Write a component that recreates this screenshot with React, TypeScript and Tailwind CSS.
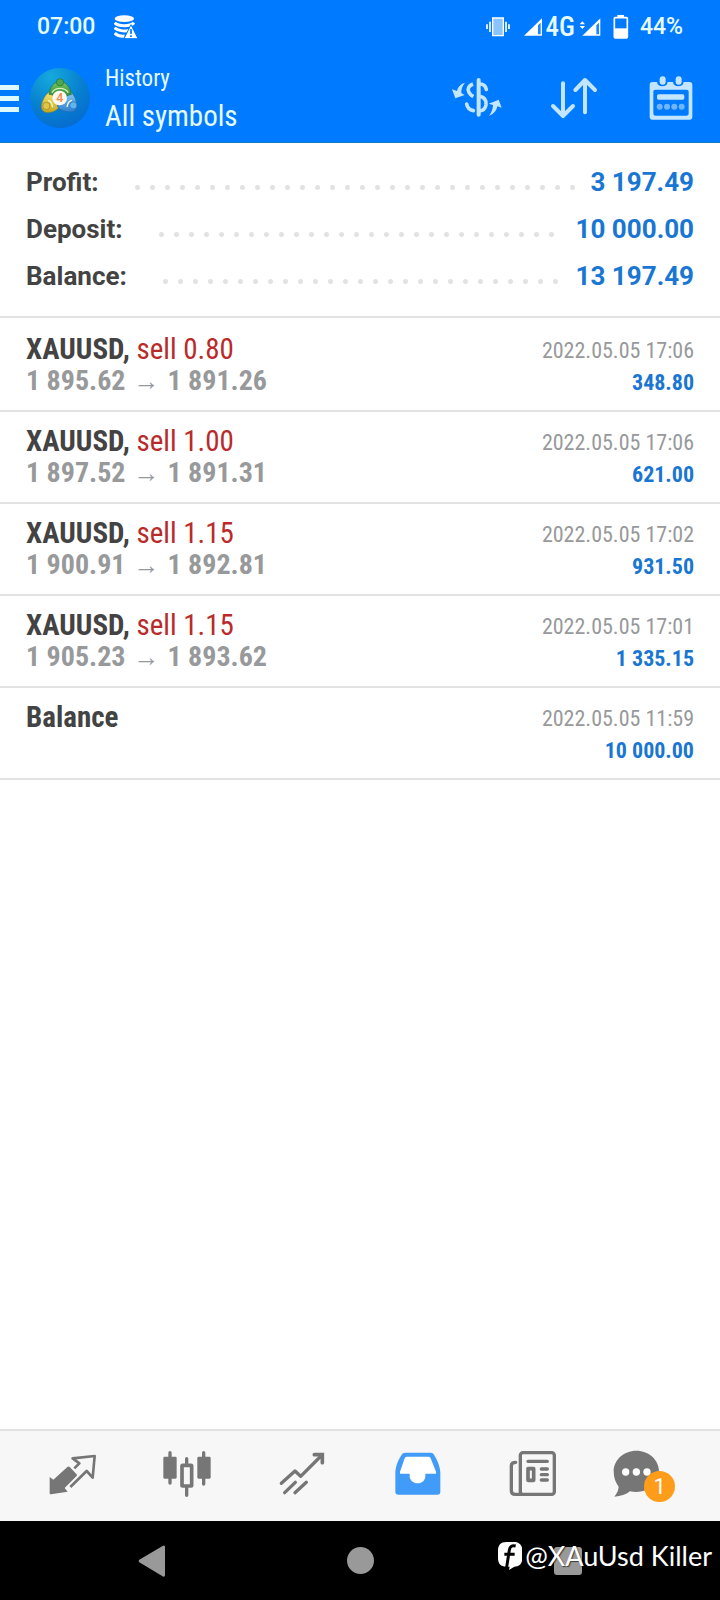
import type { ReactNode } from 'react'

interface Deal {
  id: number
  symbol: string
  action?: string
  open?: string
  close?: string
  time: string
  amount: string
}

const summary = [
  { label: 'Profit:', value: '3 197.49' },
  { label: 'Deposit:', value: '10 000.00' },
  { label: 'Balance:', value: '13 197.49' },
]

const deals: Deal[] = [
  { id: 1, symbol: 'XAUUSD,', action: 'sell 0.80', open: '1 895.62', close: '1 891.26', time: '2022.05.05 17:06', amount: '348.80' },
  { id: 2, symbol: 'XAUUSD,', action: 'sell 1.00', open: '1 897.52', close: '1 891.31', time: '2022.05.05 17:06', amount: '621.00' },
  { id: 3, symbol: 'XAUUSD,', action: 'sell 1.15', open: '1 900.91', close: '1 892.81', time: '2022.05.05 17:02', amount: '931.50' },
  { id: 4, symbol: 'XAUUSD,', action: 'sell 1.15', open: '1 905.23', close: '1 893.62', time: '2022.05.05 17:01', amount: '1 335.15' },
  { id: 5, symbol: 'Balance', time: '2022.05.05 11:59', amount: '10 000.00' },
]

function StatusBar() {
  return (
    <div className="flex h-[54px] items-center px-[37px] text-[23px] font-medium text-[#e6fbff]">
      <span>07:00</span>
      <svg className="ml-[19px] h-6 w-6" viewBox="340 43 72 72" aria-hidden>
        <ellipse cx="371" cy="54" rx="29" ry="10" fill="#fff" />
        <g fill="none" stroke="#fff" strokeWidth="9">
          <path d="M342 66c10 12 48 12 58 0" />
          <path d="M342 81c8 9 30 12 42 8" />
          <path d="M342 97c8 8 22 10 30 9" />
        </g>
        <path d="M391 72L412 114H370Z" fill="#fff" stroke="#007aff" strokeWidth="3" />
        <path d="M391 85v15M391 104v5" stroke="#007aff" strokeWidth="5" />
      </svg>
      <div className="ml-auto flex items-center">
        <svg className="h-5 w-6" viewBox="168 50 72 60" aria-hidden>
          <path d="M188 53h32v53h-32z" fill="#8ac4ff" stroke="#fff" strokeWidth="4" />
          <path d="M180 64v31M228 64v31M171 72v14M237 72v14" stroke="#fff" strokeWidth="5" />
        </svg>
        <svg className="ml-[13px] h-5 w-5" viewBox="278 50 60 60" aria-hidden>
          <path d="M281 106L335 54v52z" fill="#fff" />
          <path d="M323 75l8-8v35h-8z" fill="#1a86ff" />
        </svg>
        <span className="ml-[3px] font-['Roboto_Condensed',Roboto,sans-serif] text-[27px] leading-7 font-medium">4G</span>
        <svg className="ml-1 h-5 w-[22px]" viewBox="448 50 66 60" aria-hidden>
          <path d="M458 106L512 54v52z" fill="#fff" />
          <path d="M500 75l8-8v35h-8z" fill="#1a86ff" />
          <path d="M450 72l8-9 8 9zM450 77l8 9 8-9z" fill="#fff" />
        </svg>
        <svg className="ml-3 h-6 w-4" viewBox="551 42 48 72" aria-hidden>
          <path d="M564 42h20v8h-20z" fill="#fff" />
          <rect x="555" y="50" width="39" height="61" rx="3" fill="none" stroke="#fff" strokeWidth="5" />
          <path d="M555 82h39v29h-39z" fill="#fff" />
        </svg>
        <span className="ml-[11px]">44%</span>
      </div>
    </div>
  )
}

function Logo() {
  return (
    <svg className="ml-[11px] h-[60px] w-[60px]" viewBox="0 0 180 180" aria-hidden>
      <defs>
        <radialGradient id="disc" cx="0.35" cy="0.15" r="0.95">
          <stop offset="0" stopColor="#16a9de" />
          <stop offset="0.55" stopColor="#0780cf" />
          <stop offset="1" stopColor="#0668cf" />
        </radialGradient>
        <linearGradient id="green" x1="0" y1="0" x2="0" y2="1">
          <stop offset="0" stopColor="#7cc65c" />
          <stop offset="1" stopColor="#2c8b3c" />
        </linearGradient>
        <linearGradient id="yellow" x1="0" y1="0" x2="0" y2="1">
          <stop offset="0" stopColor="#f2ea7a" />
          <stop offset="1" stopColor="#c9a821" />
        </linearGradient>
        <linearGradient id="blue" x1="0" y1="0" x2="0" y2="1">
          <stop offset="0" stopColor="#8fd0f5" />
          <stop offset="1" stopColor="#2d7fd0" />
        </linearGradient>
      </defs>
      <circle cx="90" cy="90" r="90" fill="url(#disc)" />
      <path d="M66 68c-14 4-27 22-31 42-2 14 4 22 16 23 16 1 30-6 36-16z" fill="url(#yellow)" stroke="#9c8d22" strokeWidth="2" />
      <path d="M114 68c14 4 24 22 26 40 1 14-6 24-18 24-18 0-34-6-40-18z" fill="url(#blue)" stroke="#2467ad" strokeWidth="2" />
      <path d="M90 41c-18 0-31 16-33 38 8 0 14 4 18 8l32 0c4-4 10-7 17-7-2-22-16-39-34-39z" fill="url(#green)" stroke="#246f3c" strokeWidth="2" />
      <path d="M66 74c4-8 12-13 24-13s20 5 25 13" fill="none" stroke="#d6efc0" strokeWidth="4" />
      <path d="M54 98c6 0 12 8 14 20M126 97c-7 1-13 8-15 20" fill="none" stroke="#f4f6cf" strokeWidth="4" />
      <circle cx="90" cy="43" r="11" fill="#4fa84e" stroke="#1d733c" strokeWidth="2" />
      <circle cx="49" cy="114" r="11" fill="#e0c548" stroke="#94821e" strokeWidth="2" />
      <circle cx="130" cy="112" r="11" fill="#62b4ec" stroke="#2467ad" strokeWidth="2" />
      <circle cx="89" cy="90" r="22" fill="#fdf8f2" />
      <text x="89" y="103" textAnchor="middle" fontFamily="Roboto, sans-serif" fontSize="37" fontWeight="500" fill="#f08a4b">
        4
      </text>
    </svg>
  )
}

function AppBar() {
  return (
    <div className="flex h-[89px] items-center border-b border-[#1579c9] pr-6">
      <button aria-label="Open menu" className="flex w-[19px] flex-col gap-[6px]">
        <span className="h-[5px] w-full bg-[#dffaff]" />
        <span className="h-[5px] w-full bg-[#dffaff]" />
        <span className="h-[5px] w-full bg-[#dffaff]" />
      </button>
      <Logo />
      <div className="ml-[15px] pt-1 font-['Roboto_Condensed',Roboto,sans-serif] text-[#e6fbff]">
        <p className="text-[23px] leading-8">History</p>
        <h1 className="text-[29px] leading-[42px]">All symbols</h1>
      </div>
      <div className="ml-auto flex gap-[47px]">
        <button aria-label="Symbol filter">
          <svg className="h-[45px] w-[50px]" viewBox="67 227 150 135" fill="none" stroke="#c4e5ff" aria-hidden>
            <path d="M147 239v104" strokeWidth="12" strokeLinecap="round" />
            <path d="M151 251c10 0 17 6 19 16" strokeWidth="11" strokeLinecap="round" />
            <path d="M130 251c-13 5-18 15-12 25 3 6 8 10 13 13" strokeWidth="11" />
            <path d="M151 288c14 4 20 14 18 26-2 10-9 17-19 18" strokeWidth="11" />
            <path d="M111 311c2 11 9 18 20 20" strokeWidth="11" strokeLinecap="round" />
            <path d="M106 247c-12 3-21 12-24 25l-15-5 10 27 28-10-10-6c-1-11 3-21 11-31z" fill="#c4e5ff" stroke="none" />
            <path d="M178 347c14-6 23-16 25-29l13 4-9-24-30 12 13 4c0 13-5 23-12 33z" fill="#c4e5ff" stroke="none" />
          </svg>
        </button>
        <button aria-label="Sort">
          <svg
            className="h-[45px] w-[50px]"
            viewBox="357 227 150 135"
            fill="none"
            stroke="#c4e5ff"
            strokeWidth="12"
            strokeLinecap="round"
            strokeLinejoin="round"
            aria-hidden
          >
            <path d="M399 249v98M369 317l30 30 30-30" />
            <path d="M465 336v-96M436 269l29-30 30 30" />
          </svg>
        </button>
        <button aria-label="Period">
          <svg className="h-[45px] w-[50px]" viewBox="649 227 150 135" aria-hidden>
            <path
              fillRule="evenodd"
              d="M668 245h14c1 9 7 13 16 13s15-4 16-13h16c1 9 7 13 16 13s15-4 16-13h18c5 0 8 3 8 8v97c0 5-3 8-8 8h-112c-5 0-8-3-8-8v-97c0-5 3-8 8-8zM678 268c-5 0-7 2-7 7v64c0 5 2 7 7 7h92c5 0 7-2 7-7v-64c0-5-2-7-7-7z"
              fill="#c4e5ff"
            />
            <rect x="690" y="228" width="18" height="25" rx="9" fill="#c4e5ff" />
            <rect x="738" y="228" width="18" height="25" rx="9" fill="#c4e5ff" />
            <rect x="682" y="282" width="82" height="16" rx="5" fill="#c4e5ff" />
            <g fill="#6fb5ff">
              <circle cx="690" cy="319" r="9" />
              <circle cx="712" cy="319" r="9" />
              <circle cx="734" cy="319" r="9" />
              <circle cx="756" cy="319" r="9" />
            </g>
          </svg>
        </button>
      </div>
    </div>
  )
}

function Summary() {
  return (
    <dl className="border-b-2 border-[#e2e2e2] px-[26px] py-4 text-[26px] leading-[47px] font-bold">
      {summary.map((row) => (
        <div key={row.label} className="flex">
          <dt className="text-[#434343]">{row.label}</dt>
          {/* dotted leader */}
          <dd
            aria-hidden
            className="mt-[21px] mr-[13px] ml-[31px] h-[15px] flex-1 bg-[radial-gradient(circle,#e2e2e2_2px,transparent_3px)] bg-[length:15px_15px] bg-repeat-x"
          />
          <dd className="text-[#1976d2]">{row.value}</dd>
        </div>
      ))}
    </dl>
  )
}

function DealRow({ deal }: { deal: Deal }) {
  return (
    <li className="border-b-2 border-[#e2e2e2] px-[26px] py-[13px]">
      <div className="flex h-8 items-end justify-between">
        <p className="text-[29px] leading-8 text-[#b92b2b]">
          <span className="font-bold text-[#434343]">{deal.symbol}</span>
          {deal.action && ` ${deal.action}`}
        </p>
        <time className="text-[22px] leading-7 text-[#97999b]">{deal.time}</time>
      </div>
      <div className="flex h-8 items-end">
        {deal.open && (
          <p className="flex items-center text-[28px] leading-8 font-bold text-[#97999b]">
            {deal.open}
            <span className="mx-2 font-['Liberation_Sans',sans-serif] text-[26px] font-normal">→</span>
            {deal.close}
          </p>
        )}
        <p className="ml-auto text-[22px] leading-7 font-bold text-[#1976d2]">{deal.amount}</p>
      </div>
    </li>
  )
}

function Tab({ label, children }: { label: string; children: ReactNode }) {
  return (
    <a href="#" aria-label={label} className="flex flex-1 items-center justify-center">
      {children}
    </a>
  )
}

function TabBar() {
  return (
    <nav className="flex h-[92px] border-t-2 border-[#e2e2e2] bg-[#f7f7f7] px-[14px] pb-1">
      <Tab label="Quotes">
        <svg className="h-12 w-12" viewBox="145 91 144 144" aria-hidden>
          <path
            d="M204 141c3-1 5 0 7 2l19 20c3 3 2 5 0 7l-35 35 9 11-50 8c-3 0-4-1-4-4v-48l11 8z"
            fill="#767676"
          />
          <path
            d="M224 146l15-15-20-15 66-7-6 65-18-20-49 48"
            fill="none"
            stroke="#767676"
            strokeWidth="8"
            strokeLinejoin="round"
          />
        </svg>
      </Tab>
      <Tab label="Charts">
        <svg className="h-12 w-12" viewBox="491 91 144 144" aria-hidden>
          <g stroke="#767676" strokeWidth="10" strokeLinecap="round">
            <path d="M512 99v91M562 117v14M562 205v22M613 99v94" />
          </g>
          <rect x="492" y="111" width="40" height="66" rx="4" fill="#767676" />
          <rect x="594" y="111" width="40" height="66" rx="4" fill="#767676" />
          <rect x="548" y="137" width="29" height="62" rx="2" fill="#f7f7f7" stroke="#767676" strokeWidth="11" />
        </svg>
      </Tab>
      <Tab label="Trade">
        <svg
          className="h-12 w-12"
          viewBox="115 91 144 144"
          fill="none"
          stroke="#767676"
          strokeWidth="10"
          strokeLinecap="round"
          aria-hidden
        >
          <path d="M125 191l41-37 17 16 64-64" strokeLinejoin="round" />
          <path d="M224 105h24v24" strokeWidth="11" />
          <path d="M135 219l32-31M166 219l34-31" />
        </svg>
      </Tab>
      <Tab label="History">
        <svg className="h-12 w-12" viewBox="461 91 144 144" aria-hidden>
          <path
            d="M495 99h76c5 0 8 2 10 6 9 15 19 35 19 56v55c0 6-3 9-9 9H474c-6 0-9-3-9-9v-55c0-21 9-41 19-56 2-4 6-6 11-6z"
            fill="#419bf9"
          />
          <path
            d="M502 111h61c4 0 6 1 8 5l16 40c1 4 0 6-3 6h-29v7c0 12-9 22-23 22s-24-10-24-22v-7h-25c-4 0-5-2-4-6l14-40c2-4 5-5 9-5z"
            fill="#fff"
          />
        </svg>
      </Tab>
      <Tab label="News">
        <svg className="h-12 w-12" viewBox="88 91 144 144" fill="none" stroke="#767676" strokeWidth="10" aria-hidden>
          <rect x="122" y="99" width="102" height="125" rx="8" />
          <path d="M108 128c-8 0-13 3-13 10v75c0 8 4 11 12 11h20" strokeLinecap="round" />
          <path d="M145 125h58M185 148h18M185 165h18M185 181h18" strokeLinecap="round" />
          <rect x="145" y="147" width="17" height="35" strokeWidth="11" strokeLinejoin="round" />
        </svg>
      </Tab>
      <Tab label="Messages, 1 unread">
        <span className="relative mr-[22px]">
          <svg className="h-12 w-12" viewBox="398 91 144 144" aria-hidden>
            <path
              d="M468 93c38 0 68 28 68 62s-30 62-68 62c-7 0-13-1-19-2-12 10-28 15-47 16 8-10 12-19 13-30-9-11-15-26-15-46 0-34 30-62 68-62z"
              fill="#767676"
            />
            <g fill="#fff">
              <circle cx="436" cy="157" r="11" />
              <circle cx="468" cy="157" r="11" />
              <circle cx="500" cy="157" r="11" />
            </g>
          </svg>
          <span className="absolute top-[21px] left-[31px] flex h-[31px] w-[31px] items-center justify-center rounded-full bg-[#ff9c1a] text-[22px] text-white">
            1
          </span>
        </span>
      </Tab>
    </nav>
  )
}

function SystemNav() {
  return (
    <footer className="relative flex h-[79px] bg-black px-12">
      <button aria-label="Back" className="flex flex-1 items-center justify-center">
        <svg className="h-8 w-7" viewBox="413 373 84 96" aria-hidden>
          <path d="M490 379v85L419 421z" fill="#999" stroke="#999" strokeWidth="8" strokeLinejoin="round" />
        </svg>
      </button>
      <button aria-label="Home" className="flex flex-1 items-center justify-center">
        <span className="h-[27px] w-[27px] rounded-full bg-[#999]" />
      </button>
      <button aria-label="Recent apps" className="flex flex-1 items-center justify-center">
        <span className="h-7 w-7 rounded-[3px] bg-[#999]" />
      </button>
      <p className="absolute top-[19px] right-2 flex items-center font-[Lato,sans-serif] text-[27px] leading-8 whitespace-nowrap text-white [text-shadow:1px_1px_1px_rgba(0,0,0,0.6)]">
        <svg className="mr-[3px] h-7 w-6" viewBox="53 372 72 84" aria-hidden>
          <path
            d="M78 372h22c17 0 26 9 26 26v22c0 17-9 26-24 26l-16 10 2-10h-10c-17 0-25-9-25-26v-22c0-17 8-26 25-26z"
            fill="#fff"
          />
          <path d="M106 384c-12-3-17 2-19 12l-8 52M72 409h31" fill="none" stroke="#000" strokeWidth="9" />
        </svg>
        @XAuUsd Killer
      </p>
    </footer>
  )
}

export default function App() {
  return (
    <div className="flex min-h-screen flex-col bg-white font-[Roboto,sans-serif]">
      <header className="bg-[#007aff]">
        <StatusBar />
        <AppBar />
      </header>
      <main className="flex-1">
        <Summary />
        <ul className="pt-[2px] font-['Roboto_Condensed',Roboto,sans-serif]">
          {deals.map((deal) => (
            <DealRow key={deal.id} deal={deal} />
          ))}
        </ul>
      </main>
      <TabBar />
      <SystemNav />
    </div>
  )
}
